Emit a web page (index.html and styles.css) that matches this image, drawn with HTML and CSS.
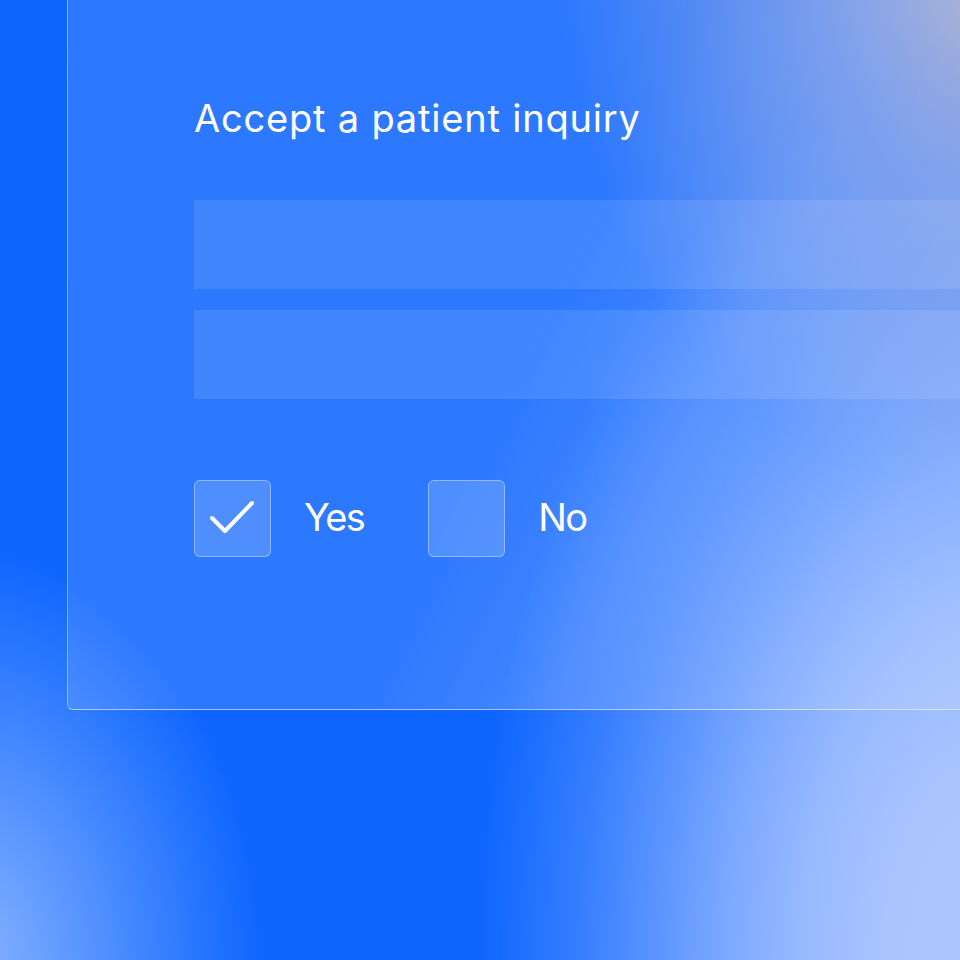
FILE: index.html
```html
<!DOCTYPE html>
<html lang="en">
<head>
<meta charset="utf-8">
<title>Accept a patient inquiry</title>
<link rel="stylesheet" href="styles.css">
</head>
<body>
<div class="stage">
  <section class="card">
    <h1 class="title">Accept a patient inquiry</h1>
    <div class="fields">
      <div class="field"></div>
      <div class="field"></div>
    </div>
    <div class="options">
      <label class="option">
        <span class="box checked">
          <svg class="check" viewBox="0 0 76 76" width="76" height="76" aria-hidden="true">
            <path d="M18 38 L31 51 L58 23" fill="none" stroke="#fff" stroke-width="4" stroke-linecap="round" stroke-linejoin="round"/>
          </svg>
        </span>
        <span class="label">Yes</span>
      </label>
      <label class="option">
        <span class="box"></span>
        <span class="label">No</span>
      </label>
    </div>
  </section>
</div>
</body>
</html>
```

FILE: styles.css
```css
* { box-sizing: border-box; }
html, body { margin: 0; padding: 0; }
body {
  width: 960px;
  height: 960px;
  overflow: hidden;
  font-family: "Inter", "DejaVu Sans", sans-serif;
  color: #fff;
  background:
    radial-gradient(ellipse 430px 520px at 990px -30px, rgba(192,178,186,0.95) 0%, rgba(160,168,215,0.6) 40%, rgba(140,160,230,0) 100%),
    radial-gradient(ellipse 520px 900px at 1000px 960px,
      rgba(176,200,255,1) 0%,
      rgba(176,200,255,0.95) 23%,
      rgba(176,200,255,0.85) 38%,
      rgba(176,200,255,0.66) 54%,
      rgba(176,200,255,0.46) 67%,
      rgba(176,200,255,0.26) 80%,
      rgba(176,200,255,0) 100%),
    radial-gradient(ellipse 300px 420px at -40px 970px, rgba(140,182,255,1) 0%, rgba(140,182,255,0.6) 40%, rgba(140,182,255,0) 100%),
    #0f66ff;
}
.stage {
  padding-left: 67px;
}
.card {
  width: 920px;
  height: 730px;
  margin-top: -20px;
  padding: 118px 0 0 126px;
  border-left: 1px solid rgba(255,255,255,0.4);
  border-bottom: 1px solid rgba(255,255,255,0.55);
  border-bottom-left-radius: 6px;
  background:
    linear-gradient(116deg, rgba(130,172,255,0) 50%, rgba(130,172,255,0.28) 66%, rgba(130,172,255,0) 86%),
    rgba(255,255,255,0.12);
}
.title {
  margin: 0;
  font-weight: 400;
  font-size: 38px;
  line-height: 40px;
  letter-spacing: 0.8px;
}
.fields {
  margin-top: 62px;
  display: flex;
  flex-direction: column;
  gap: 21px;
}
.field {
  height: 89px;
  background: rgba(255,255,255,0.1);
}
.options {
  margin-top: 81px;
  display: flex;
  gap: 64px;
}
.option {
  display: flex;
  align-items: center;
  gap: 33px;
}
.box {
  width: 77px;
  height: 77px;
  border-radius: 6px;
  border: 1px solid rgba(255,255,255,0.38);
  background: rgba(255,255,255,0.17);
  display: block;
  position: relative;
}
.check {
  position: absolute;
  left: -1px;
  top: -1px;
}
.label {
  font-size: 38px;
  line-height: 40px;
  letter-spacing: -1.6px;
  position: relative;
  top: -2px;
}
```
